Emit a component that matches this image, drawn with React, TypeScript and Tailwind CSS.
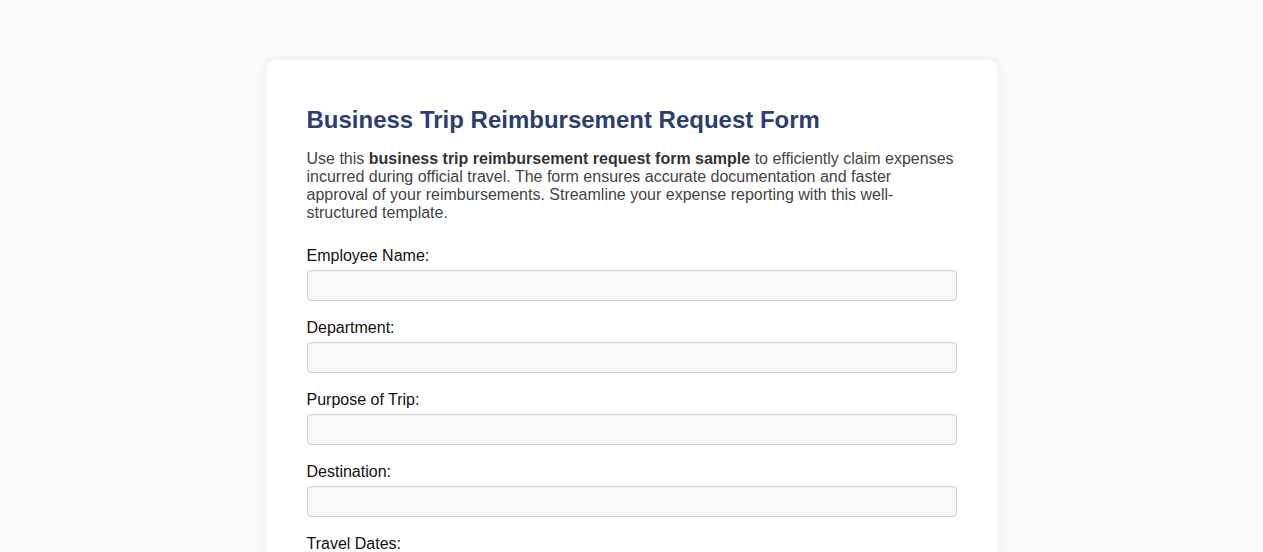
import React from "react";

const fields = [
  "Employee Name:",
  "Department:",
  "Purpose of Trip:",
  "Destination:",
  "Travel Dates:",
  "Transportation Costs:",
  "Accommodation Costs:",
  "Meal Expenses:",
];

export default function App() {
  return (
    <div className="min-h-screen bg-[#f9f9f9] pt-[60px] pb-10" style={{ fontFamily: '"Liberation Sans", Arial, sans-serif' }}>
      <div className="mx-auto w-[730px] rounded-[8px] bg-white px-10 pt-[46px] pb-10 shadow-[0_0_10px_rgba(0,0,0,0.06)]">
        <h1 className="mb-[16px] text-[24px] font-bold leading-[28px] text-[#2c3e6e]">
          Business Trip Reimbursement Request Form
        </h1>
        <p className="mb-[25px] text-[16px] leading-[18px] text-[#444]">
          Use this <strong className="font-bold text-[#333]">business trip reimbursement request form sample</strong> to efficiently claim expenses incurred during official travel. The form ensures accurate documentation and faster approval of your reimbursements. Streamline your expense reporting with this well-structured template.
        </p>
        <form>
          {fields.map((f) => (
            <div key={f} className="mb-[18px]">
              <label className="mb-[5px] block text-[16px] leading-[18px] text-[#111]">{f}</label>
              <input
                type="text"
                className="block h-[31px] w-full rounded-[4px] border border-[#ccc] bg-[#f9f9fb] px-2 text-[16px] outline-none"
              />
            </div>
          ))}
        </form>
      </div>
    </div>
  );
}
